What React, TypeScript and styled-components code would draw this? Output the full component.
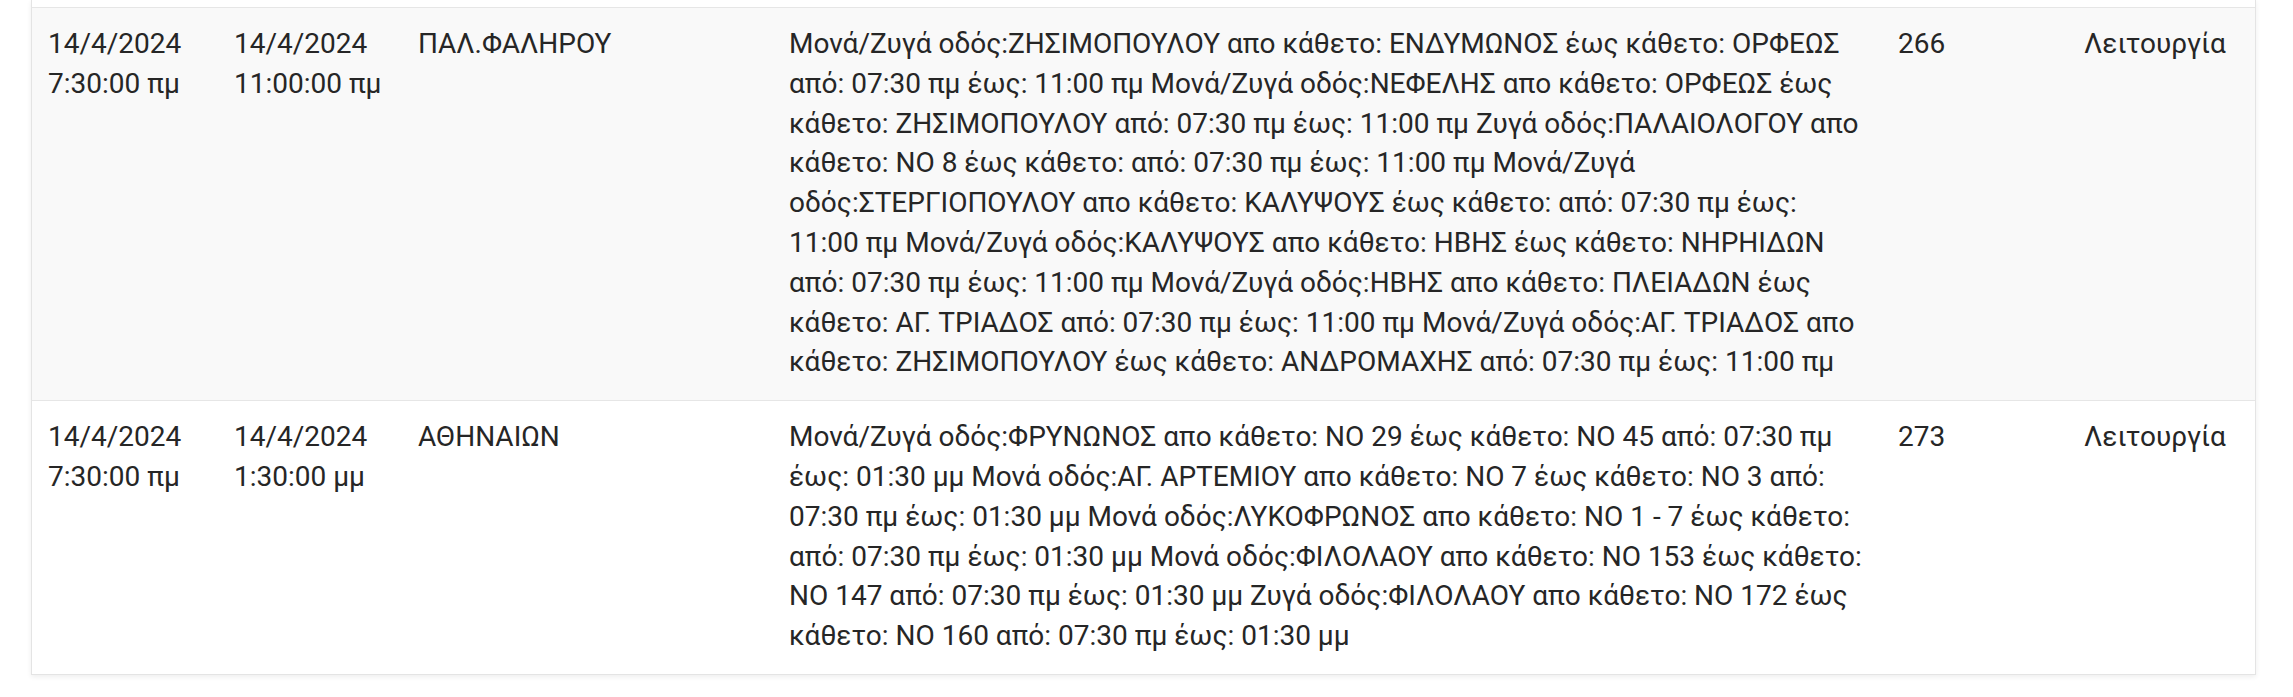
import styled, { createGlobalStyle } from "styled-components";

const GlobalStyle = createGlobalStyle`
  html, body {
    margin: 0;
    padding: 0;
    background: #ffffff;
  }
  body {
    font-family: Roboto, "Noto Sans", "Liberation Sans", sans-serif;
    color: #262626;
  }
`;

const Page = styled.div`
  padding-left: 31px;
  width: 2293px;
  height: 697px;
  box-sizing: border-box;
  overflow: hidden;
`;

const Card = styled.div`
  width: 2225px;
  box-sizing: border-box;
  border: 1px solid #e4e4e4;
  border-top: none;
  background: #ffffff;
  box-shadow: 0 2px 5px rgba(0, 0, 0, 0.07);
`;

// bottom of the row above, scrolled out of view
const RowTail = styled.div`
  height: 7px;
  background: #ffffff;
`;

const Row = styled.div<{ $striped?: boolean }>`
  display: grid;
  grid-template-columns: 186px 184px 371px 1109px 186px 1fr;
  border-top: 1px solid #e6e6e6;
  background: ${(p) => (p.$striped ? "#f9f9f9" : "#ffffff")};
`;

const Cell = styled.div`
  padding: 16px 0 18px 16px;
  font-size: 28px;
  line-height: 39.8px;
  color: #262626;
`;

type Outage = {
  start: string;
  end: string;
  area: string;
  details: string;
  code: string;
  status: string;
};

const outages: Outage[] = [
  {
    start: "14/4/2024 7:30:00 πμ",
    end: "14/4/2024 11:00:00 πμ",
    area: "ΠΑΛ.ΦΑΛΗΡΟΥ",
    details:
      "Μονά/Ζυγά οδός:ΖΗΣΙΜΟΠΟΥΛΟΥ απο κάθετο: ΕΝΔΥΜΩΝΟΣ έως κάθετο: ΟΡΦΕΩΣ από: 07:30 πμ έως: 11:00 πμ Μονά/Ζυγά οδός:ΝΕΦΕΛΗΣ απο κάθετο: ΟΡΦΕΩΣ έως κάθετο: ΖΗΣΙΜΟΠΟΥΛΟΥ από: 07:30 πμ έως: 11:00 πμ Ζυγά οδός:ΠΑΛΑΙΟΛΟΓΟΥ απο κάθετο: ΝΟ 8 έως κάθετο: από: 07:30 πμ έως: 11:00 πμ Μονά/Ζυγά οδός:ΣΤΕΡΓΙΟΠΟΥΛΟΥ απο κάθετο: ΚΑΛΥΨΟΥΣ έως κάθετο: από: 07:30 πμ έως: 11:00 πμ Μονά/Ζυγά οδός:ΚΑΛΥΨΟΥΣ απο κάθετο: ΗΒΗΣ έως κάθετο: ΝΗΡΗΙΔΩΝ από: 07:30 πμ έως: 11:00 πμ Μονά/Ζυγά οδός:ΗΒΗΣ απο κάθετο: ΠΛΕΙΑΔΩΝ έως κάθετο: ΑΓ. ΤΡΙΑΔΟΣ από: 07:30 πμ έως: 11:00 πμ Μονά/Ζυγά οδός:ΑΓ. ΤΡΙΑΔΟΣ απο κάθετο: ΖΗΣΙΜΟΠΟΥΛΟΥ έως κάθετο: ΑΝΔΡΟΜΑΧΗΣ από: 07:30 πμ έως: 11:00 πμ",
    code: "266",
    status: "Λειτουργία",
  },
  {
    start: "14/4/2024 7:30:00 πμ",
    end: "14/4/2024 1:30:00 μμ",
    area: "ΑΘΗΝΑΙΩΝ",
    details:
      "Μονά/Ζυγά οδός:ΦΡΥΝΩΝΟΣ απο κάθετο: ΝΟ 29 έως κάθετο: ΝΟ 45 από: 07:30 πμ έως: 01:30 μμ Μονά οδός:ΑΓ. ΑΡΤΕΜΙΟΥ απο κάθετο: ΝΟ 7 έως κάθετο: ΝΟ 3 από: 07:30 πμ έως: 01:30 μμ Μονά οδός:ΛΥΚΟΦΡΩΝΟΣ απο κάθετο: ΝΟ 1 - 7 έως κάθετο: από: 07:30 πμ έως: 01:30 μμ Μονά οδός:ΦΙΛΟΛΑΟΥ απο κάθετο: ΝΟ 153 έως κάθετο: ΝΟ 147 από: 07:30 πμ έως: 01:30 μμ Ζυγά οδός:ΦΙΛΟΛΑΟΥ απο κάθετο: ΝΟ 172 έως κάθετο: ΝΟ 160 από: 07:30 πμ έως: 01:30 μμ",
    code: "273",
    status: "Λειτουργία",
  },
];

const keepTimes = (text: string) =>
  text.replace(/(\d\d:\d\d) (πμ|μμ)/g, "$1\u00a0$2");

function App() {
  return (
    <Page>
      <GlobalStyle />
      <Card>
        <RowTail />
        {outages.map((o, i) => (
          <Row key={o.code} $striped={i % 2 === 0}>
            <Cell>{o.start}</Cell>
            <Cell>{o.end}</Cell>
            <Cell>{o.area}</Cell>
            <Cell>{keepTimes(o.details)}</Cell>
            <Cell>{o.code}</Cell>
            <Cell>{o.status}</Cell>
          </Row>
        ))}
      </Card>
    </Page>
  );
}

export default App;
